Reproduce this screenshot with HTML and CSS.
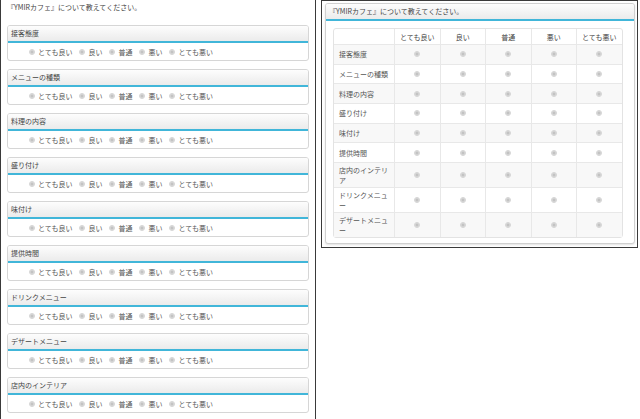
FILE: index.html
```html
<html>
    <head>
        <meta charset="UTF-8">
        <title>YMIRカフェ アンケート</title>
        <link rel="stylesheet" href="styles.css">
    </head>
    <body>
        <div class="page">
            <div class="panel list-panel">
                <p class="title">『YMIRカフェ』について教えてください。</p>

                <div class="card">
                    <div class="card-head">接客態度</div>
                    <div class="card-body">
                        <span class="opt"><i class="radio"></i>とても良い</span>
                        <span class="opt"><i class="radio"></i>良い</span>
                        <span class="opt"><i class="radio"></i>普通</span>
                        <span class="opt"><i class="radio"></i>悪い</span>
                        <span class="opt"><i class="radio"></i>とても悪い</span>
                    </div>
                </div>

                <div class="card">
                    <div class="card-head">メニューの種類</div>
                    <div class="card-body">
                        <span class="opt"><i class="radio"></i>とても良い</span>
                        <span class="opt"><i class="radio"></i>良い</span>
                        <span class="opt"><i class="radio"></i>普通</span>
                        <span class="opt"><i class="radio"></i>悪い</span>
                        <span class="opt"><i class="radio"></i>とても悪い</span>
                    </div>
                </div>

                <div class="card">
                    <div class="card-head">料理の内容</div>
                    <div class="card-body">
                        <span class="opt"><i class="radio"></i>とても良い</span>
                        <span class="opt"><i class="radio"></i>良い</span>
                        <span class="opt"><i class="radio"></i>普通</span>
                        <span class="opt"><i class="radio"></i>悪い</span>
                        <span class="opt"><i class="radio"></i>とても悪い</span>
                    </div>
                </div>

                <div class="card">
                    <div class="card-head">盛り付け</div>
                    <div class="card-body">
                        <span class="opt"><i class="radio"></i>とても良い</span>
                        <span class="opt"><i class="radio"></i>良い</span>
                        <span class="opt"><i class="radio"></i>普通</span>
                        <span class="opt"><i class="radio"></i>悪い</span>
                        <span class="opt"><i class="radio"></i>とても悪い</span>
                    </div>
                </div>

                <div class="card">
                    <div class="card-head">味付け</div>
                    <div class="card-body">
                        <span class="opt"><i class="radio"></i>とても良い</span>
                        <span class="opt"><i class="radio"></i>良い</span>
                        <span class="opt"><i class="radio"></i>普通</span>
                        <span class="opt"><i class="radio"></i>悪い</span>
                        <span class="opt"><i class="radio"></i>とても悪い</span>
                    </div>
                </div>

                <div class="card">
                    <div class="card-head">提供時間</div>
                    <div class="card-body">
                        <span class="opt"><i class="radio"></i>とても良い</span>
                        <span class="opt"><i class="radio"></i>良い</span>
                        <span class="opt"><i class="radio"></i>普通</span>
                        <span class="opt"><i class="radio"></i>悪い</span>
                        <span class="opt"><i class="radio"></i>とても悪い</span>
                    </div>
                </div>

                <div class="card">
                    <div class="card-head">ドリンクメニュー</div>
                    <div class="card-body">
                        <span class="opt"><i class="radio"></i>とても良い</span>
                        <span class="opt"><i class="radio"></i>良い</span>
                        <span class="opt"><i class="radio"></i>普通</span>
                        <span class="opt"><i class="radio"></i>悪い</span>
                        <span class="opt"><i class="radio"></i>とても悪い</span>
                    </div>
                </div>

                <div class="card">
                    <div class="card-head">デザートメニュー</div>
                    <div class="card-body">
                        <span class="opt"><i class="radio"></i>とても良い</span>
                        <span class="opt"><i class="radio"></i>良い</span>
                        <span class="opt"><i class="radio"></i>普通</span>
                        <span class="opt"><i class="radio"></i>悪い</span>
                        <span class="opt"><i class="radio"></i>とても悪い</span>
                    </div>
                </div>

                <div class="card">
                    <div class="card-head">店内のインテリア</div>
                    <div class="card-body">
                        <span class="opt"><i class="radio"></i>とても良い</span>
                        <span class="opt"><i class="radio"></i>良い</span>
                        <span class="opt"><i class="radio"></i>普通</span>
                        <span class="opt"><i class="radio"></i>悪い</span>
                        <span class="opt"><i class="radio"></i>とても悪い</span>
                    </div>
                </div>
            </div>

            <div class="panel grid-panel">
                <div class="card">
                    <div class="card-head">『YMIRカフェ』について教えてください。</div>
                    <div class="grid-body">
                        <table class="grid">
                            <colgroup>
                                <col class="col-label">
                                <col class="col-opt">
                                <col class="col-opt">
                                <col class="col-opt">
                                <col class="col-opt">
                                <col class="col-opt">
                            </colgroup>
                            <tr class="head-row">
                                <th></th>
                                <th>とても良い</th>
                                <th>良い</th>
                                <th>普通</th>
                                <th>悪い</th>
                                <th>とても悪い</th>
                            </tr>
                            <tr>
                                <td>接客態度</td>
                                <td><i class="radio"></i></td><td><i class="radio"></i></td><td><i class="radio"></i></td><td><i class="radio"></i></td><td><i class="radio"></i></td>
                            </tr>
                            <tr>
                                <td>メニューの種類</td>
                                <td><i class="radio"></i></td><td><i class="radio"></i></td><td><i class="radio"></i></td><td><i class="radio"></i></td><td><i class="radio"></i></td>
                            </tr>
                            <tr>
                                <td>料理の内容</td>
                                <td><i class="radio"></i></td><td><i class="radio"></i></td><td><i class="radio"></i></td><td><i class="radio"></i></td><td><i class="radio"></i></td>
                            </tr>
                            <tr>
                                <td>盛り付け</td>
                                <td><i class="radio"></i></td><td><i class="radio"></i></td><td><i class="radio"></i></td><td><i class="radio"></i></td><td><i class="radio"></i></td>
                            </tr>
                            <tr>
                                <td>味付け</td>
                                <td><i class="radio"></i></td><td><i class="radio"></i></td><td><i class="radio"></i></td><td><i class="radio"></i></td><td><i class="radio"></i></td>
                            </tr>
                            <tr>
                                <td>提供時間</td>
                                <td><i class="radio"></i></td><td><i class="radio"></i></td><td><i class="radio"></i></td><td><i class="radio"></i></td><td><i class="radio"></i></td>
                            </tr>
                            <tr class="tall">
                                <td>店内のインテリア</td>
                                <td><i class="radio"></i></td><td><i class="radio"></i></td><td><i class="radio"></i></td><td><i class="radio"></i></td><td><i class="radio"></i></td>
                            </tr>
                            <tr class="tall">
                                <td>ドリンクメニュー</td>
                                <td><i class="radio"></i></td><td><i class="radio"></i></td><td><i class="radio"></i></td><td><i class="radio"></i></td><td><i class="radio"></i></td>
                            </tr>
                            <tr class="tall">
                                <td>デザートメニュー</td>
                                <td><i class="radio"></i></td><td><i class="radio"></i></td><td><i class="radio"></i></td><td><i class="radio"></i></td><td><i class="radio"></i></td>
                            </tr>
                        </table>
                    </div>
                </div>
            </div>
        </div>
    </body>
</html>
```

FILE: styles.css
```css
html {
    background-color: white;
}

body {
    margin: 0;
    font-family: "Noto Sans CJK JP", "Noto Sans", sans-serif;
    font-size: 7px;
    color: #555;
}

.page {
    display: flex;
    align-items: flex-start;
}

.panel {
    box-sizing: border-box;
    border: 1px solid #3a3a3a;
}

.list-panel {
    width: 316px;
    border-top: none;
    padding: 2px 6px 0 6px;
}

.grid-panel {
    width: 317px;
    margin-left: 5px;
    padding: 2px 2px 3px 3px;
}

.title {
    margin: 0 0 13px 0;
    line-height: 10px;
    color: #444;
}

.card {
    border: 1px solid #d6d6d6;
    border-radius: 3px;
    margin-bottom: 8px;
    background-color: white;
    overflow: hidden;
}

.grid-panel .card {
    margin-bottom: 0;
    border-color: #d0d0d0;
    box-shadow: 0 1px 2px rgba(0, 0, 0, 0.12);
}

.card-head {
    height: 15px;
    line-height: 15px;
    padding-left: 3px;
    color: #444;
    background: linear-gradient(#fdfdfd, #ebebeb);
    border-bottom: 2px solid #41b6d9;
}

.card-body {
    height: 17px;
    display: flex;
    align-items: center;
    padding-left: 21px;
}

.opt {
    display: flex;
    align-items: center;
    margin-right: 7px;
    white-space: nowrap;
}

.radio {
    display: inline-block;
    box-sizing: border-box;
    width: 6px;
    height: 6px;
    margin-right: 3px;
    border-radius: 50%;
    border: 1px solid #d3d3d3;
    background: radial-gradient(circle, #bcbcbc 0, #c8c8c8 45%, #e4e4e4 75%);
}

.grid-body {
    padding: 7px 12px 5px 7px;
}

.grid {
    width: 288px;
    font: inherit;
    color: inherit;
    table-layout: fixed;
    border-collapse: separate;
    border-spacing: 0;
    border: 1px solid #e3e3e3;
    border-radius: 3px;
}

.col-label { width: 60px; }
.col-opt { width: 45.5px; }

.grid th,
.grid td {
    padding: 2px 5px;
    line-height: 10px;
    border-top: 1px solid #e8e8e8;
    border-left: 1px solid #e8e8e8;
    font-weight: normal;
    text-align: center;
    vertical-align: middle;
}

.grid td:first-child {
    text-align: left;
}

.grid tr > :first-child {
    border-left: none;
}

.grid tr {
    height: 19.7px;
}

.grid tr.head-row {
    height: 15px;
}

.grid .head-row th {
    border-top: none;
    color: #444;
}

.grid tr.tall {
    height: 25px;
}

.grid tr:nth-child(even) td {
    background-color: #f8f8f8;
}

.grid .radio {
    margin: 0;
    vertical-align: middle;
}
```
